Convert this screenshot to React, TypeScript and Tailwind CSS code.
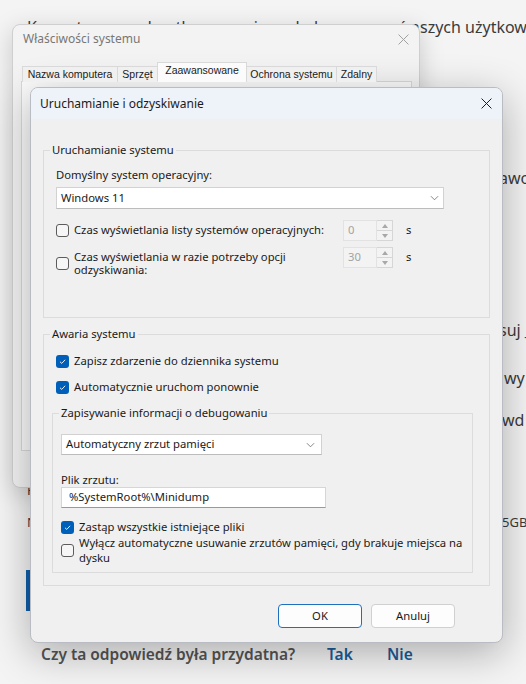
import React from 'react';

const CheckBox: React.FC<{ checked?: boolean }> = ({ checked }) =>
    checked ? (
        <span className="flex h-[13px] w-[13px] shrink-0 items-center justify-center rounded-[3px] bg-[#005fb8]">
            <svg viewBox="0 0 10 10" className="h-[9px] w-[9px]">
                <path d="M2.2 5.3 4.2 7.1 7.9 3.1" fill="none" stroke="#ffffff" strokeWidth="1" />
            </svg>
        </span>
    ) : (
        <span className="h-[13px] w-[13px] shrink-0 rounded-[3px] border border-[#5c5c5c] bg-[#f6f6f6]" />
    );

const Chevron: React.FC = () => (
    <svg viewBox="0 0 10 6" className="h-[6px] w-[9px]">
        <path d="M1 1 5 5 9 1" fill="none" stroke="#6b6b6b" strokeWidth="0.9" />
    </svg>
);

const CloseIcon: React.FC<{ color: string }> = ({ color }) => (
    <svg viewBox="0 0 10 10" className="h-[11px] w-[11px]">
        <path d="M0.5 0.5 9.5 9.5 M9.5 0.5 0.5 9.5" fill="none" stroke={color} strokeWidth="0.9" />
    </svg>
);

const SpinBox: React.FC<{ value: string }> = ({ value }) => (
    <div className="flex h-[21px] items-center">
        <div className="flex h-full w-[34px] items-center border border-[#e2e2e2] bg-[#f3f3f3] pl-[4px] text-[#a3a3a3]">{value}</div>
        <div className="flex h-full w-[16px] flex-col border border-l-0 border-[#d6d6d6] bg-[#f3f3f3]">
            <div className="flex flex-1 items-center justify-center border-b border-[#d6d6d6]">
                <svg viewBox="0 0 6 4" className="h-[4px] w-[6px]"><path d="M0 4 3 0 6 4Z" fill="#a8a8a8" /></svg>
            </div>
            <div className="flex flex-1 items-center justify-center">
                <svg viewBox="0 0 6 4" className="h-[4px] w-[6px]"><path d="M0 0 3 4 6 0Z" fill="#a8a8a8" /></svg>
            </div>
        </div>
        <span className="ml-[13px]">s</span>
    </div>
);

const tabs = [
    { label: 'Nazwa komputera', w: 'w-[96px]' },
    { label: 'Sprzęt', w: 'w-[41px]' },
    { label: 'Zaawansowane', w: 'w-[90px]', active: true },
    { label: 'Ochrona systemu', w: 'w-[91px]' },
    { label: 'Zdalny', w: 'w-[41px]' },
];

const App: React.FC = () => {
    return (
        <div className="relative h-[684px] w-[526px] overflow-hidden bg-[#f4f4f4] font-['Noto_Sans',sans-serif] text-[#3b3b3b]">
            {/* page behind the dialogs */}
            <div className="flex flex-col overflow-hidden whitespace-nowrap pl-[27px]">
                <div className="mt-[15px] flex h-[24px] text-[16px] leading-[24px]">
                    <span className="w-[393px] shrink-0 overflow-hidden">Korzystamy z usług tłumaczeniowych, by wesprzeć na</span>
                    <span className="shrink-0">szych użytkowników</span>
                </div>
                <div className="mt-[127px] h-[24px] pl-[472px] text-[16px] leading-[24px]">awo</div>
                <div className="mt-[128px] h-[24px] pl-[472px] text-[16px] leading-[24px]">suj _</div>
                <div className="mt-[24px] h-[24px] pl-[477px] text-[16px] leading-[24px]">wy</div>
                <div className="mt-[18px] h-[24px] pl-[475px] text-[16px] leading-[24px]">wd</div>
                <div className="mt-[49px] h-[18px] text-[13px] leading-[18px]">F</div>
                <div className="mt-[14px] flex h-[18px] text-[13px] leading-[18px]">
                    <span className="w-[475px] shrink-0">N</span>
                    <span className="shrink-0">5GB</span>
                </div>
                <div className="-ml-[1px] mt-[39px] h-[41px] w-[5px] bg-[#0f60aa]" />
                <div className="mt-[32px] flex h-[24px] items-center pl-[14px] text-[15.5px] font-semibold text-[#555555]">
                    <span className="w-[286px] shrink-0">Czy ta odpowiedź była przydatna?</span>
                    <span className="w-[60px] shrink-0 text-[#1b5c99]">Tak</span>
                    <span className="shrink-0 text-[#1b5c99]">Nie</span>
                </div>
            </div>

            {/* back window: Właściwości systemu */}
            <div className="absolute left-[12px] top-[24px] flex h-[464px] w-[408px] flex-col overflow-hidden rounded-[8px] border border-[#cfcfcf] bg-[#f3f3f3] shadow-[0_6px_24px_rgba(0,0,0,0.18)]">
                <div className="flex h-[28px] shrink-0 items-center justify-between pl-[10px] pr-[10px] text-[12px] text-[#777777]">
                    <span>Właściwości systemu</span>
                    <CloseIcon color="#a0a0a0" />
                </div>
                <div className="ml-[9px] mt-[9px] flex h-[19px] items-end font-['Liberation_Sans',sans-serif] text-[10.5px] text-[#1a1a1a]">
                    {tabs.map((t) => (
                        <div
                            key={t.label}
                            className={`${t.w} relative z-10 -mb-px flex shrink-0 items-center justify-center border border-[#d9d9d9] ${
                                t.active ? 'h-[20px] border-b-[#fbfbfb] bg-[#fbfbfb] pb-[3px]' : 'h-[16px] border-b-0 bg-[#f0f0f0]'
                            } -ml-px first:ml-0`}
                        >
                            {t.label}
                        </div>
                    ))}
                </div>
                <div className="ml-[8px] h-[370px] w-[391px] border border-[#d9d9d9] bg-[#fbfbfb]" />
            </div>

            {/* front window: Uruchamianie i odzyskiwanie */}
            <div className="absolute left-[30px] top-[87px] flex h-[556px] w-[473px] flex-col overflow-hidden rounded-[8px] border border-[#b9bcc2] bg-[#f0f0f0] text-[11.25px] text-[#1a1a1a] shadow-[0_10px_40px_rgba(0,0,0,0.3)]">
                <div className="flex h-[31px] shrink-0 items-center justify-between bg-[#eef3f9] pl-[9px] pr-[10px] text-[12px]">
                    <span>Uruchamianie i odzyskiwanie</span>
                    <CloseIcon color="#1a1a1a" />
                </div>

                <div className="flex flex-col px-[12px] pt-[23px]">
                    <fieldset className="h-[176px] border border-[#dcdcdc] px-[12px]">
                        <legend className="-ml-[6px] px-[2px] leading-[16px]">Uruchamianie systemu</legend>
                        <div className="mt-[9px] leading-[16px]">Domyślny system operacyjny:</div>
                        <div className="mt-[4px] flex h-[22px] w-[388px] items-center justify-between border border-[#d2d2d2] border-b-[#bcbcbc] bg-white pl-[4px] pr-[4px]">
                            <span>Windows 11</span>
                            <Chevron />
                        </div>
                        <div className="mt-[11px] flex items-center">
                            <div className="flex w-[287px] shrink-0 items-center gap-[5px]">
                                <CheckBox />
                                <span className="whitespace-nowrap">Czas wyświetlania listy systemów operacyjnych:</span>
                            </div>
                            <SpinBox value="0" />
                        </div>
                        <div className="mt-[6px] flex items-start">
                            <div className="mt-[3px] flex w-[287px] shrink-0 items-center gap-[5px]">
                                <CheckBox />
                                <span className="whitespace-nowrap leading-[13px]">
                                    Czas wyświetlania w razie potrzeby opcji
                                    <br />
                                    odzyskiwania:
                                </span>
                            </div>
                            <SpinBox value="30" />
                        </div>
                    </fieldset>

                    <fieldset className="mt-[8px] border border-[#dcdcdc] px-[12px] pb-[12px]">
                        <legend className="-ml-[6px] px-[2px] leading-[16px]">Awaria systemu</legend>
                        <div className="mt-[11px] flex h-[16px] items-center gap-[5px]">
                            <CheckBox checked />
                            <span>Zapisz zdarzenie do dziennika systemu</span>
                        </div>
                        <div className="mt-[10px] flex h-[16px] items-center gap-[5px]">
                            <CheckBox checked />
                            <span>Automatycznie uruchom ponownie</span>
                        </div>
                        <fieldset className="-ml-[4px] mr-[4px] mt-[10px] border border-[#dcdcdc] pb-[7px] pl-[8px]">
                            <legend className="-ml-[2px] px-[2px] leading-[16px]">Zapisywanie informacji o debugowaniu</legend>
                            <div className="mt-[13px] flex h-[21px] w-[261px] items-center justify-between border border-[#d2d2d2] border-b-[#bcbcbc] bg-white pl-[4px] pr-[6px]">
                                <span>Automatyczny zrzut pamięci</span>
                                <Chevron />
                            </div>
                            <div className="mt-[17px] leading-[15px]">Plik zrzutu:</div>
                            <div className="flex h-[21px] w-[265px] items-center border border-[#d6d6d6] border-b-[#9a9a9a] bg-white pl-[7px]">
                                %SystemRoot%\Minidump
                            </div>
                            <div className="mt-[11px] flex h-[16px] items-center gap-[5px]">
                                <CheckBox checked />
                                <span>Zastąp wszystkie istniejące pliki</span>
                            </div>
                            <div className="flex items-center gap-[5px]">
                                <CheckBox />
                                <span className="whitespace-nowrap leading-[15px]">
                                    Wyłącz automatyczne usuwanie zrzutów pamięci, gdy brakuje miejsca na
                                    <br />
                                    dysku
                                </span>
                            </div>
                        </fieldset>
                    </fieldset>

                    <div className="mr-[35px] mt-[18px] flex justify-end gap-[9px]">
                        <button className="h-[24px] w-[84px] rounded-[4px] border border-[#1f6fbf] bg-[#fdfdfd]">OK</button>
                        <button className="h-[24px] w-[84px] rounded-[4px] border border-[#d0d0d0] bg-[#fdfdfd]">Anuluj</button>
                    </div>
                </div>
            </div>
        </div>
    );
};

export default App;
